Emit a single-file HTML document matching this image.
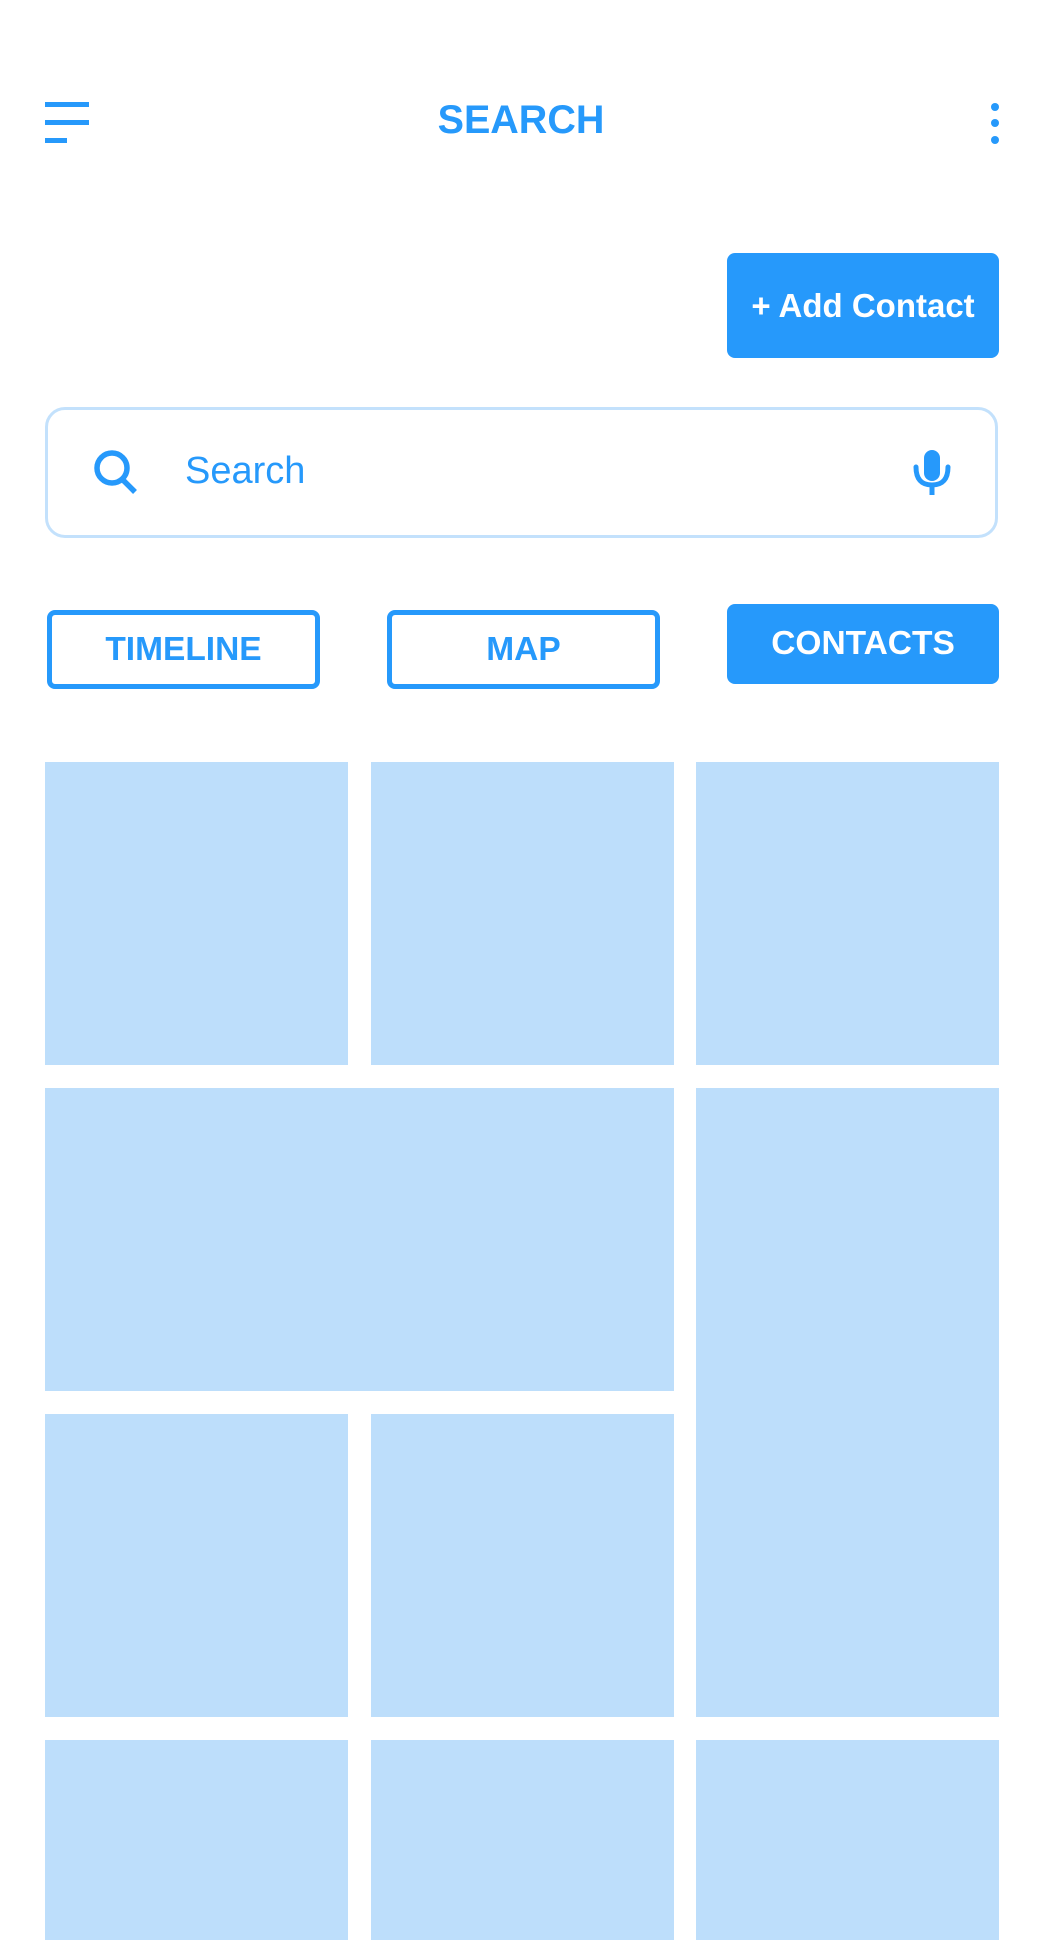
<!DOCTYPE html>
<html><head><meta charset="utf-8"><style>
*{margin:0;padding:0;box-sizing:border-box}
html,body{width:1042px;height:1853px;overflow:hidden;background:#fff;font-family:"Liberation Sans",Arial,sans-serif}
.a{position:absolute}
.bar{position:absolute;background:#2699fb;height:5px}
.dot{position:absolute;width:8px;height:8px;border-radius:50%;background:#2699fb;left:991px}
.title{left:0;width:1042px;top:98px;text-align:center;color:#2699fb;font-weight:bold;font-size:39.5px;line-height:44px}
.btn{position:absolute;background:#2699fb;color:#fff;font-weight:bold;border-radius:8px;display:flex;align-items:center;justify-content:center}
.tab{position:absolute;border:5px solid #2699fb;border-radius:8px;color:#2699fb;font-weight:bold;font-size:33.5px;display:flex;align-items:center;justify-content:center}
.c{position:absolute;background:#bddefb}
</style></head><body>
<div class="bar" style="left:45px;top:102px;width:44px"></div>
<div class="bar" style="left:45px;top:120px;width:44px"></div>
<div class="bar" style="left:45px;top:138px;width:22px"></div>
<div class="a title">SEARCH</div>
<div class="dot" style="top:103px"></div>
<div class="dot" style="top:119px"></div>
<div class="dot" style="top:136px"></div>

<div class="btn" style="left:727px;top:253px;width:272px;height:105px;font-size:33px">+ Add Contact</div>

<div class="a" style="left:45px;top:407px;width:953px;height:131px;border:3px solid #c3e1fc;border-radius:20px"></div>
<svg class="a" style="left:85px;top:445px" width="60" height="55" viewBox="0 0 60 55">
<circle cx="27" cy="23" r="15" fill="none" stroke="#2699fb" stroke-width="5.5"/>
<line x1="37" y1="34" x2="50" y2="47" stroke="#2699fb" stroke-width="5.5"/>
</svg>
<div class="a" style="left:185px;top:449px;font-size:38px;line-height:44px;color:#2699fb">Search</div>
<svg class="a" style="left:910px;top:445px" width="45" height="55" viewBox="0 0 45 55">
<rect x="14" y="5" width="16" height="31" rx="8" fill="#2699fb"/>
<path d="M6 22 Q6 40 22 40 Q38 40 38 22" fill="none" stroke="#2699fb" stroke-width="5" stroke-linecap="round"/>
<rect x="19.5" y="38" width="5" height="12" fill="#2699fb"/>
</svg>

<div class="tab" style="left:47px;top:610px;width:273px;height:79px">TIMELINE</div>
<div class="tab" style="left:387px;top:610px;width:273px;height:79px">MAP</div>
<div class="btn" style="left:727px;top:604px;width:272px;height:80px;font-size:33.5px">CONTACTS</div>

<div class="c" style="left:45px;top:762px;width:303px;height:303px"></div>
<div class="c" style="left:371px;top:762px;width:303px;height:303px"></div>
<div class="c" style="left:696px;top:762px;width:303px;height:303px"></div>
<div class="c" style="left:45px;top:1088px;width:629px;height:303px"></div>
<div class="c" style="left:696px;top:1088px;width:303px;height:629px"></div>
<div class="c" style="left:45px;top:1414px;width:303px;height:303px"></div>
<div class="c" style="left:371px;top:1414px;width:303px;height:303px"></div>
<div class="c" style="left:45px;top:1740px;width:303px;height:200px"></div>
<div class="c" style="left:371px;top:1740px;width:303px;height:200px"></div>
<div class="c" style="left:696px;top:1740px;width:303px;height:200px"></div>
</body></html>
